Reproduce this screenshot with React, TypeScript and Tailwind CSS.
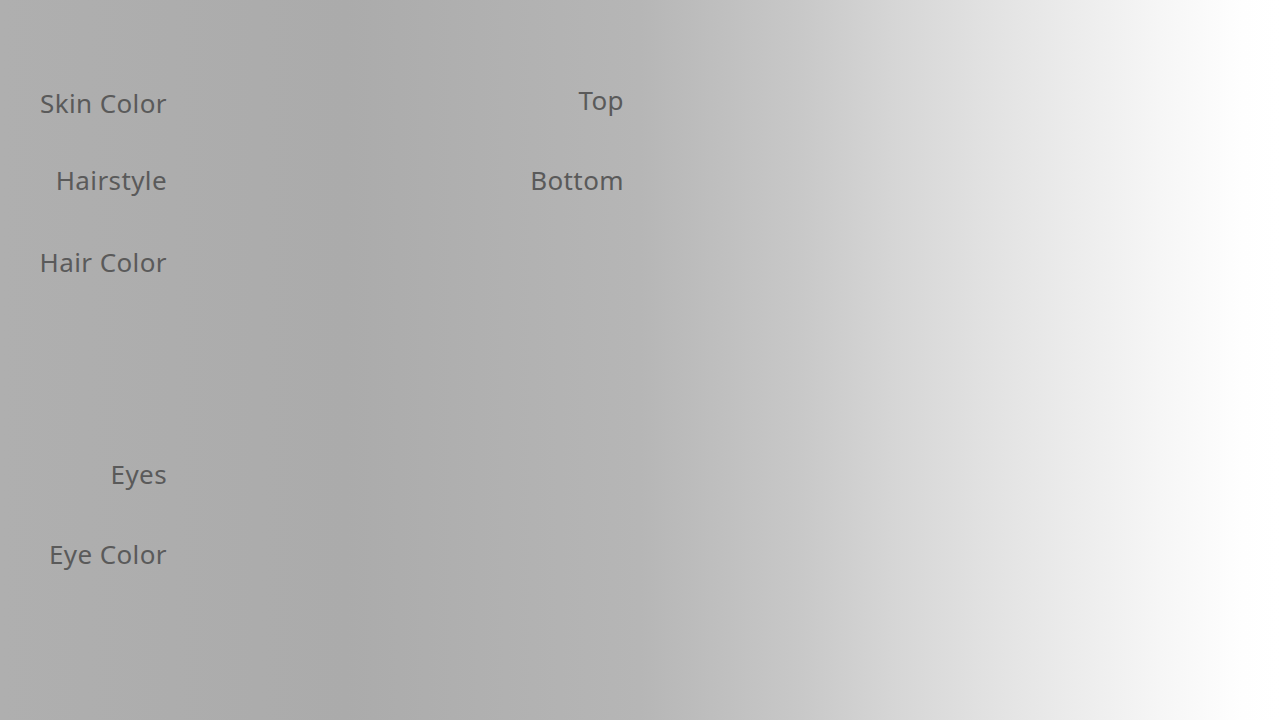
import React from "react";

export default function App() {
  const font = { fontFamily: '"Noto Sans", "Open Sans", sans-serif' };
  return (
    <div
      className="w-[1280px] h-[720px] overflow-hidden bg-[linear-gradient(to_right,#afafaf_0%,#ababab_27%,#b6b6b6_50%,#c8c8c8_62.5%,#d6d6d6_70%,#e3e3e3_78%,#ececec_84%,#f6f6f6_90.6%,#fefefe_97%,#ffffff_100%)] text-[#5a5a5a] text-[26px] tracking-[0.4px] leading-[32px] flex"
      style={font}
    >
      <div className="w-[167px] flex flex-col items-end pt-[87px]">
        <div>Skin Color</div>
        <div className="mt-[45px]">Hairstyle</div>
        <div className="mt-[50px]">Hair Color</div>
        <div className="mt-[180px]">Eyes</div>
        <div className="mt-[48px]">Eye Color</div>
      </div>
      <div className="w-[457px] flex flex-col items-end pt-[84px]">
        <div>Top</div>
        <div className="mt-[48px]">Bottom</div>
      </div>
    </div>
  );
}
